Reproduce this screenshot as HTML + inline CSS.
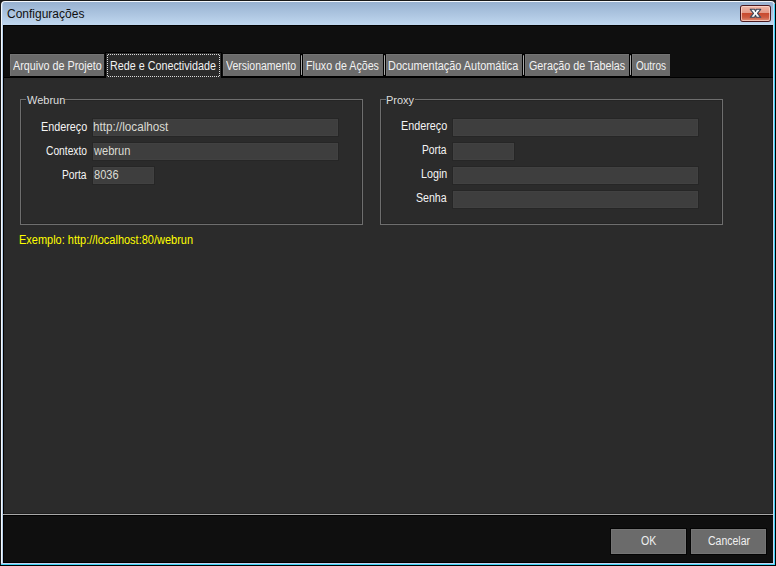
<!DOCTYPE html>
<html><head><meta charset="utf-8"><title>Configurações</title>
<style>
html,body{margin:0;padding:0;width:776px;height:566px;overflow:hidden;background:#181818;}
.b{position:absolute;}
.t{position:absolute;white-space:nowrap;font-family:'Liberation Sans', sans-serif;}
</style></head><body>
<div class="b" style="left:0px;top:0px;width:776px;height:566px;background:#181818;"></div>
<div class="b" style="left:1px;top:1px;width:774px;height:564px;background:#f4f8fc;border-radius:4px 4px 0 0;"></div>
<div class="b" style="left:2px;top:2px;width:772px;height:563px;background:#b8cfe9;border-radius:3px 3px 0 0;"></div>
<div class="b" style="left:773px;top:3px;width:1px;height:562px;background:#c8d6f0;"></div>
<div class="b" style="left:774px;top:4px;width:1px;height:561px;background:#40d4f6;"></div>
<div class="b" style="left:1px;top:563px;width:773px;height:1px;background:#c4d2f0;"></div>
<div class="b" style="left:1px;top:564px;width:774px;height:1px;background:#40d4f6;"></div>
<div class="b" style="left:0px;top:565px;width:776px;height:1px;background:#000;"></div>
<div class="b" style="left:775px;top:4px;width:1px;height:562px;background:#000;"></div>
<div class="b" style="left:3px;top:2px;width:770px;height:23px;background:linear-gradient(#97b1d0,#c0d7ef);border-radius:2px 2px 0 0;"></div>
<div class="b" style="left:3px;top:25px;width:770px;height:538px;background:#000;"></div>
<div class="b" style="left:4px;top:26px;width:769px;height:51px;background:#0f0f0f;"></div>
<div class="b" style="left:4px;top:78px;width:768px;height:435px;background:#2b2b2b;"></div>
<div class="b" style="left:772px;top:78px;width:1px;height:435px;background:#1e1d1c;"></div>
<div class="b" style="left:4px;top:513px;width:769px;height:1px;background:#1e1e1e;"></div>
<div class="b" style="left:3px;top:514px;width:770px;height:1px;background:#a8a8a8;"></div>
<div class="b" style="left:4px;top:516px;width:769px;height:46px;background:#0f0f0f;"></div>
<div class="t" style="left:7px;top:6px;font-size:12px;line-height:17px;color:#101010;">Configurações</div>
<div class="b" style="left:740px;top:5px;width:31px;height:17px;background:#4a1a20;border-radius:3px;"></div>
<div class="b" style="left:741px;top:6px;width:29px;height:15px;background:linear-gradient(#f0b8a8 0%,#e39a88 45%,#c8482c 46%,#cc5a40 75%,#e09078 100%);border-radius:2px;box-shadow:inset 0 0 0 1px rgba(255,220,210,0.7);"></div>
<svg class="b" style="left:748px;top:7px" width="16" height="12" viewBox="0 0 16 12">
<path d="M2.3 2.3 L6.6 2.3 L7.5 4.4 L8.4 2.3 L12.7 2.3 L9.5 6.3 L12.7 10.3 L8.4 10.3 L7.5 8.2 L6.6 10.3 L2.3 10.3 L5.5 6.3 Z" fill="#fafafa" stroke="#3a4658" stroke-width="1.1" stroke-linejoin="round"/>
</svg>
<div class="b" style="left:10px;top:53px;width:660px;height:1px;background:#060606;"></div>
<div class="b" style="left:10px;top:54px;width:94px;height:22px;background:#6a6a6a;box-shadow:inset 1px 1px 0 #747474;"></div>
<div class="t" style="left:13.00px;top:60px;font-size:12px;line-height:13px;color:#f2f2f2;transform:scaleX(0.8980);transform-origin:0 0;">Arquivo de Projeto</div>
<div class="b" style="left:223px;top:54px;width:77px;height:22px;background:#6a6a6a;box-shadow:inset 1px 1px 0 #747474;"></div>
<div class="t" style="left:226.00px;top:60px;font-size:12px;line-height:13px;color:#f2f2f2;transform:scaleX(0.8750);transform-origin:0 0;">Versionamento</div>
<div class="b" style="left:303px;top:54px;width:80px;height:22px;background:#6a6a6a;box-shadow:inset 1px 1px 0 #747474;"></div>
<div class="t" style="left:306.11px;top:60px;font-size:12px;line-height:13px;color:#f2f2f2;transform:scaleX(0.8889);transform-origin:0 0;">Fluxo de Ações</div>
<div class="b" style="left:386px;top:54px;width:136px;height:22px;background:#6a6a6a;box-shadow:inset 1px 1px 0 #747474;"></div>
<div class="t" style="left:388.09px;top:60px;font-size:12px;line-height:13px;color:#f2f2f2;transform:scaleX(0.9091);transform-origin:0 0;">Documentação Automática</div>
<div class="b" style="left:525px;top:54px;width:104px;height:22px;background:#6a6a6a;box-shadow:inset 1px 1px 0 #747474;"></div>
<div class="t" style="left:529.00px;top:60px;font-size:12px;line-height:13px;color:#f2f2f2;transform:scaleX(0.8972);transform-origin:0 0;">Geração de Tabelas</div>
<div class="b" style="left:632px;top:54px;width:38px;height:22px;background:#6a6a6a;box-shadow:inset 1px 1px 0 #747474;"></div>
<div class="t" style="left:636.00px;top:60px;font-size:12px;line-height:13px;color:#f2f2f2;transform:scaleX(0.8333);transform-origin:0 0;">Outros</div>
<div class="b" style="left:10px;top:76px;width:660px;height:2px;background:#000;"></div>
<div class="b" style="left:300px;top:54px;width:3px;height:23px;background:#000;"></div>
<div class="b" style="left:301px;top:55px;width:1px;height:20px;background:#a8a8a8;border-radius:1px;"></div>
<div class="b" style="left:383px;top:54px;width:3px;height:23px;background:#000;"></div>
<div class="b" style="left:384px;top:55px;width:1px;height:20px;background:#a8a8a8;border-radius:1px;"></div>
<div class="b" style="left:522px;top:54px;width:3px;height:23px;background:#000;"></div>
<div class="b" style="left:523px;top:55px;width:1px;height:20px;background:#a8a8a8;border-radius:1px;"></div>
<div class="b" style="left:629px;top:54px;width:3px;height:23px;background:#000;"></div>
<div class="b" style="left:630px;top:55px;width:1px;height:20px;background:#a8a8a8;border-radius:1px;"></div>
<div class="b" style="left:105px;top:52px;width:117px;height:26px;background:#000;"></div>
<div class="b" style="left:106px;top:53px;width:115px;height:25px;background:#2b2b2b;"></div>
<div class="b" style="left:107px;top:54px;width:113px;height:23px;background:repeating-linear-gradient(90deg,#dcdcdc 0 1px,transparent 1px 2px) 1px 0/111px 1px no-repeat,repeating-linear-gradient(90deg,#dcdcdc 0 1px,transparent 1px 2px) 1px 22px/111px 1px no-repeat,repeating-linear-gradient(180deg,#dcdcdc 0 1px,transparent 1px 2px) 0 1px/1px 21px no-repeat,repeating-linear-gradient(180deg,#dcdcdc 0 1px,transparent 1px 2px) 112px 1px/1px 21px no-repeat;"></div>
<div class="t" style="left:110.10px;top:60px;font-size:12px;line-height:13px;color:#f2f2f2;transform:scaleX(0.8974);transform-origin:0 0;">Rede e Conectividade</div>
<div class="b" style="left:20px;top:99px;width:343px;height:126px;border:1px solid #6e6e6e;box-sizing:border-box;"></div>
<div class="b" style="left:21px;top:100px;width:341px;height:124px;border:1px solid #252525;box-sizing:border-box;"></div>
<div class="b" style="left:26px;top:95px;width:39px;height:10px;background:#2b2b2b;"></div>
<div class="t" style="left:27px;top:94px;font-size:11px;line-height:13px;color:#dedede;">Webrun</div>
<div class="b" style="left:380px;top:99px;width:343px;height:126px;border:1px solid #6e6e6e;box-sizing:border-box;"></div>
<div class="b" style="left:381px;top:100px;width:341px;height:124px;border:1px solid #252525;box-sizing:border-box;"></div>
<div class="b" style="left:386px;top:95px;width:29px;height:10px;background:#2b2b2b;"></div>
<div class="t" style="left:386px;top:94px;font-size:11px;line-height:13px;color:#dedede;">Proxy</div>
<div class="t" style="left:41.10px;top:121px;font-size:12px;line-height:13px;color:#f4f4f4;transform:scaleX(0.9000);transform-origin:0 0;">Endereço</div>
<div class="b" style="left:93px;top:119px;width:245px;height:17px;background:#3e3e3e;box-shadow:0 0 0 1px #262626, inset 0 0 0 1px #414141;"></div>
<div class="t" style="left:93.03px;top:121px;font-size:12px;line-height:13px;color:#dcdcd4;transform:scaleX(0.9737);transform-origin:0 0;">http://localhost</div>
<div class="t" style="left:46.00px;top:145px;font-size:12px;line-height:13px;color:#f4f4f4;transform:scaleX(0.8542);transform-origin:0 0;">Contexto</div>
<div class="b" style="left:93px;top:143px;width:245px;height:17px;background:#3e3e3e;box-shadow:0 0 0 1px #262626, inset 0 0 0 1px #414141;"></div>
<div class="t" style="left:94.00px;top:145px;font-size:12px;line-height:13px;color:#dcdcd4;transform:scaleX(0.9231);transform-origin:0 0;">webrun</div>
<div class="t" style="left:62.14px;top:169px;font-size:12px;line-height:13px;color:#f4f4f4;transform:scaleX(0.8571);transform-origin:0 0;">Porta</div>
<div class="b" style="left:93px;top:167px;width:61px;height:17px;background:#3e3e3e;box-shadow:0 0 0 1px #262626, inset 0 0 0 1px #414141;"></div>
<div class="t" style="left:94.00px;top:169px;font-size:12px;line-height:13px;color:#dcdcd4;transform:scaleX(0.9231);transform-origin:0 0;">8036</div>
<div class="t" style="left:401.10px;top:120px;font-size:12px;line-height:13px;color:#f4f4f4;transform:scaleX(0.9000);transform-origin:0 0;">Endereço</div>
<div class="b" style="left:453px;top:119px;width:245px;height:17px;background:#3e3e3e;box-shadow:0 0 0 1px #262626, inset 0 0 0 1px #414141;"></div>
<div class="t" style="left:422.14px;top:144px;font-size:12px;line-height:13px;color:#f4f4f4;transform:scaleX(0.8571);transform-origin:0 0;">Porta</div>
<div class="b" style="left:453px;top:143px;width:61px;height:17px;background:#3e3e3e;box-shadow:0 0 0 1px #262626, inset 0 0 0 1px #414141;"></div>
<div class="t" style="left:421.11px;top:168px;font-size:12px;line-height:13px;color:#f4f4f4;transform:scaleX(0.8929);transform-origin:0 0;">Login</div>
<div class="b" style="left:453px;top:167px;width:245px;height:17px;background:#3e3e3e;box-shadow:0 0 0 1px #262626, inset 0 0 0 1px #414141;"></div>
<div class="t" style="left:416.12px;top:192px;font-size:12px;line-height:13px;color:#f4f4f4;transform:scaleX(0.8824);transform-origin:0 0;">Senha</div>
<div class="b" style="left:453px;top:191px;width:245px;height:17px;background:#3e3e3e;box-shadow:0 0 0 1px #262626, inset 0 0 0 1px #414141;"></div>
<div class="t" style="left:19.08px;top:234px;font-size:12px;line-height:13px;color:#ffff00;transform:scaleX(0.9153);transform-origin:0 0;">Exemplo: http://localhost:80/webrun</div>
<div class="b" style="left:610px;top:528px;width:77px;height:27px;background:#040404;"></div>
<div class="b" style="left:611px;top:529px;width:75px;height:25px;background:#6b6b6b;box-shadow:inset 0 0 0 1px #747474;"></div>
<div class="t" style="left:641.00px;top:535px;font-size:12px;line-height:13px;color:#f0f0f0;transform:scaleX(0.8824);transform-origin:0 0;">OK</div>
<div class="b" style="left:690px;top:528px;width:77px;height:27px;background:#040404;"></div>
<div class="b" style="left:691px;top:529px;width:75px;height:25px;background:#6b6b6b;box-shadow:inset 0 0 0 1px #747474;"></div>
<div class="t" style="left:708.00px;top:535px;font-size:12px;line-height:13px;color:#f0f0f0;transform:scaleX(0.8750);transform-origin:0 0;">Cancelar</div>
</body></html>
